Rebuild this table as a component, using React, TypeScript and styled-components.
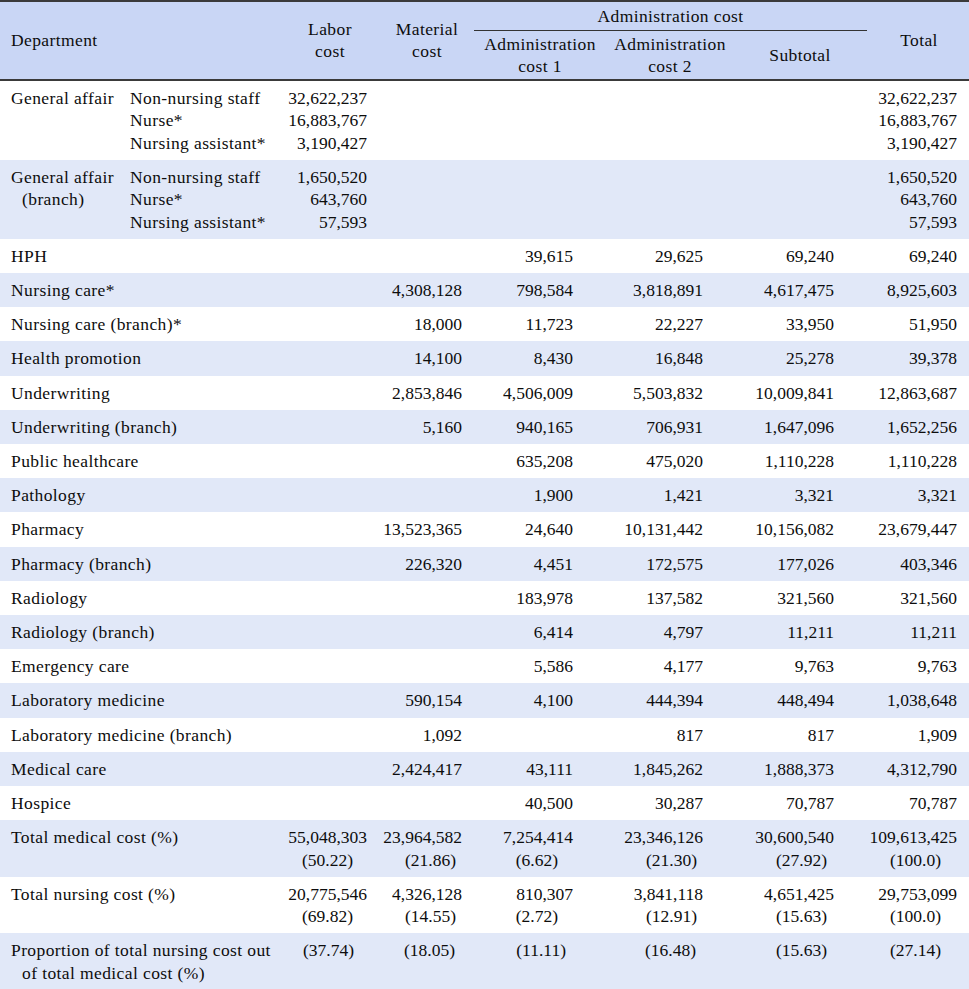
import React from 'react';
import styled, { createGlobalStyle } from 'styled-components';

const GlobalStyle = createGlobalStyle`
  html, body { margin: 0; padding: 0; background: #ffffff; }
  body {
    font-family: "Liberation Serif", "Times New Roman", serif;
    color: #0d0d0d;
  }
`;

const HEAD_BG = '#c9d6f5';
const STRIPE_BG = '#e1e8f8';
const PAD_RIGHT = [16, 9, 36, 28, 35, 12];
const COL_WIDTHS = [119, 158, 106, 88, 138, 122, 138, 100];

const Frame = styled.div`
  width: 969px;
  border-top: 2px solid #3a3a3a;
  border-bottom: 2px solid #5c5c5c;
`;

const Table = styled.table`
  width: 969px;
  border-collapse: collapse;
  border-spacing: 0;
  table-layout: fixed;
  font-size: 17.5px;
  line-height: 22.5px;
`;

const HeadRow = styled.tr`
  background: ${HEAD_BG};
`;

const Head = styled.thead`
  border-bottom: 2px solid #3a3a3a;
`;

const HeadCell = styled.th<{ $align?: 'left' | 'center'; $tight?: boolean }>`
  font-weight: normal;
  letter-spacing: 0.4px;
  white-space: nowrap;
  text-align: ${p => p.$align ?? 'center'};
  vertical-align: middle;
  padding: ${p => (p.$tight ? '2px 2px 1px' : '0 11px')};
`;

const SpanHeadCell = styled.th`
  font-weight: normal;
  letter-spacing: 0.4px;
  white-space: nowrap;
  text-align: center;
  vertical-align: bottom;
  padding: 3px 2px 0 3px;
`;

const SpanLabel = styled.div`
  padding-bottom: 2px;
  border-bottom: 1px solid #333;
`;

const BodyRow = styled.tr<{ $shade: boolean }>`
  background: ${p => (p.$shade ? STRIPE_BG : '#ffffff')};
`;

const DeptCell = styled.td<{ $hang?: boolean }>`
  text-align: left;
  vertical-align: top;
  white-space: nowrap;
  letter-spacing: 0.4px;
  padding: 6px 11px 5.7px ${p => (p.$hang ? 22 : 11)}px;
  text-indent: ${p => (p.$hang ? -11 : 0)}px;
`;

const SubCell = styled.td`
  text-align: left;
  vertical-align: top;
  white-space: nowrap;
  letter-spacing: 0.4px;
  padding: 6px 4px 5.7px 11px;
`;

const NumCell = styled.td<{ $col: number }>`
  text-align: right;
  vertical-align: top;
  white-space: nowrap;
  padding: 6px ${p => PAD_RIGHT[p.$col]}px 5.7px 0;
`;

const Line = styled.span<{ $inset?: number }>`
  display: block;
  padding-right: ${p => p.$inset ?? 0}px;
`;

type Cell = string | { lines: string[] } | { main?: string; pct: string; inset: number };

type Row = {
  dept: string[];
  hang?: boolean;
  sub?: string[];
  cells: Cell[];
};

const simple = (dept: string, vals: string[]): Row => ({ dept: [dept], cells: vals });

const TOTAL_INSETS = [14, 6, 15, 6, 7, 16];
const PROP_INSETS = [13, 7, 7, 7, 7, 16];

const totalRow = (dept: string, mains: string[], pcts: string[]): Row => ({
  dept: [dept],
  cells: mains.map((m, i) => ({ main: m, pct: pcts[i], inset: TOTAL_INSETS[i] })),
});

const ROWS: Row[] = [
  {
    dept: ['General affair'],
    sub: ['Non-nursing staff', 'Nurse*', 'Nursing assistant*'],
    cells: [
      { lines: ['32,622,237', '16,883,767', '3,190,427'] },
      '', '', '', '',
      { lines: ['32,622,237', '16,883,767', '3,190,427'] },
    ],
  },
  {
    dept: ['General affair', '(branch)'],
    hang: true,
    sub: ['Non-nursing staff', 'Nurse*', 'Nursing assistant*'],
    cells: [
      { lines: ['1,650,520', '643,760', '57,593'] },
      '', '', '', '',
      { lines: ['1,650,520', '643,760', '57,593'] },
    ],
  },
  simple('HPH', ['', '', '39,615', '29,625', '69,240', '69,240']),
  simple('Nursing care*', ['', '4,308,128', '798,584', '3,818,891', '4,617,475', '8,925,603']),
  simple('Nursing care (branch)*', ['', '18,000', '11,723', '22,227', '33,950', '51,950']),
  simple('Health promotion', ['', '14,100', '8,430', '16,848', '25,278', '39,378']),
  simple('Underwriting', ['', '2,853,846', '4,506,009', '5,503,832', '10,009,841', '12,863,687']),
  simple('Underwriting (branch)', ['', '5,160', '940,165', '706,931', '1,647,096', '1,652,256']),
  simple('Public healthcare', ['', '', '635,208', '475,020', '1,110,228', '1,110,228']),
  simple('Pathology', ['', '', '1,900', '1,421', '3,321', '3,321']),
  simple('Pharmacy', ['', '13,523,365', '24,640', '10,131,442', '10,156,082', '23,679,447']),
  simple('Pharmacy (branch)', ['', '226,320', '4,451', '172,575', '177,026', '403,346']),
  simple('Radiology', ['', '', '183,978', '137,582', '321,560', '321,560']),
  simple('Radiology (branch)', ['', '', '6,414', '4,797', '11,211', '11,211']),
  simple('Emergency care', ['', '', '5,586', '4,177', '9,763', '9,763']),
  simple('Laboratory medicine', ['', '590,154', '4,100', '444,394', '448,494', '1,038,648']),
  simple('Laboratory medicine (branch)', ['', '1,092', '', '817', '817', '1,909']),
  simple('Medical care', ['', '2,424,417', '43,111', '1,845,262', '1,888,373', '4,312,790']),
  simple('Hospice', ['', '', '40,500', '30,287', '70,787', '70,787']),
  totalRow(
    'Total medical cost (%)',
    ['55,048,303', '23,964,582', '7,254,414', '23,346,126', '30,600,540', '109,613,425'],
    ['(50.22)', '(21.86)', '(6.62)', '(21.30)', '(27.92)', '(100.0)'],
  ),
  totalRow(
    'Total nursing cost (%)',
    ['20,775,546', '4,326,128', '810,307', '3,841,118', '4,651,425', '29,753,099'],
    ['(69.82)', '(14.55)', '(2.72)', '(12.91)', '(15.63)', '(100.0)'],
  ),
  {
    dept: ['Proportion of total nursing cost out', 'of total medical cost (%)'],
    hang: true,
    cells: ['(37.74)', '(18.05)', '(11.11)', '(16.48)', '(15.63)', '(27.14)'].map((p, i) => ({
      pct: p,
      inset: PROP_INSETS[i],
    })),
  },
];

function renderCell(cell: Cell) {
  if (typeof cell === 'string') return cell;
  if ('lines' in cell) return cell.lines.map((l, i) => <Line key={i}>{l}</Line>);
  return (
    <>
      {cell.main && <Line>{cell.main}</Line>}
      <Line $inset={cell.inset}>{cell.pct}</Line>
    </>
  );
}

function DeptText({ lines }: { lines: string[] }) {
  return (
    <>
      {lines.map((l, i) => (
        <React.Fragment key={i}>
          {i > 0 && <br />}
          {l}
        </React.Fragment>
      ))}
    </>
  );
}

export default function App() {
  return (
    <>
      <GlobalStyle />
      <Frame>
        <Table>
          <colgroup>
            {COL_WIDTHS.map((w, i) => (
              <col key={i} style={{ width: w }} />
            ))}
          </colgroup>
          <Head>
            <HeadRow>
              <HeadCell rowSpan={2} colSpan={2} $align="left">Department</HeadCell>
              <HeadCell rowSpan={2}>Labor<br />cost</HeadCell>
              <HeadCell rowSpan={2}>Material<br />cost</HeadCell>
              <SpanHeadCell colSpan={3}>
                <SpanLabel>Administration cost</SpanLabel>
              </SpanHeadCell>
              <HeadCell rowSpan={2}>Total</HeadCell>
            </HeadRow>
            <HeadRow>
              <HeadCell $tight>Administration<br />cost 1</HeadCell>
              <HeadCell $tight>Administration<br />cost 2</HeadCell>
              <HeadCell $tight>Subtotal</HeadCell>
            </HeadRow>
          </Head>
          <tbody>
            {ROWS.map((row, ri) => (
              <BodyRow key={ri} $shade={ri % 2 === 1}>
                {row.sub ? (
                  <>
                    <DeptCell $hang={row.hang}><DeptText lines={row.dept} /></DeptCell>
                    <SubCell><DeptText lines={row.sub} /></SubCell>
                  </>
                ) : (
                  <DeptCell colSpan={2} $hang={row.hang}><DeptText lines={row.dept} /></DeptCell>
                )}
                {row.cells.map((c, ci) => (
                  <NumCell key={ci} $col={ci}>{renderCell(c)}</NumCell>
                ))}
              </BodyRow>
            ))}
          </tbody>
        </Table>
      </Frame>
    </>
  );
}
